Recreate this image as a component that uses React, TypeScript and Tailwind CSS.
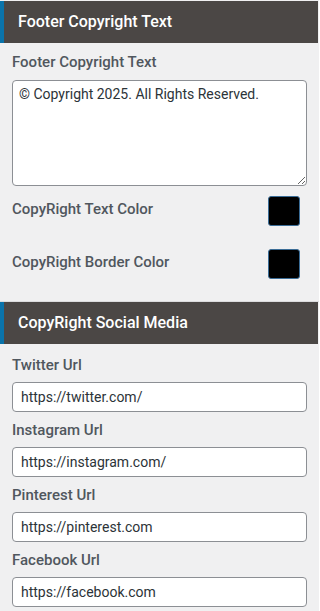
import React from "react";

const font = { fontFamily: "Roboto, 'Noto Sans', sans-serif" };

function Header({ title }: { title: string }) {
  return (
    <div className="mr-[1px] flex h-[42px] items-center border-l-4 border-[#0a73aa] bg-[#4b4745] pl-[14px] text-[16px] font-medium text-white">
      {title}
    </div>
  );
}

function UrlField({ label, value }: { label: string; value: string }) {
  return (
    <div className="flex flex-col">
      <div className="h-[20px] text-[15px] leading-[20px] font-medium text-[#50575e]">{label}</div>
      <input
        readOnly
        value={value}
        className="mt-[7px] h-[30px] w-full rounded-[4px] border border-[#8c8f94] bg-white px-[8px] text-[14px] text-[#2c3338] outline-none"
        style={font}
      />
    </div>
  );
}

export default function App() {
  return (
    <div className="w-[319px] min-h-[611px] bg-[#f0f0f1] pt-[1px]" style={font}>
      <Header title="Footer Copyright Text" />
      <div className="px-[12px] pt-[9px]">
        <div className="h-[20px] text-[15px] leading-[20px] font-medium text-[#50575e]">Footer Copyright Text</div>
        <textarea
          readOnly
          value="© Copyright 2025. All Rights Reserved."
          className="mt-[8px] block h-[106px] w-full rounded-[4px] border border-[#8c8f94] bg-white px-[6px] py-[3px] text-[14px] leading-[20px] text-[#2c3338] outline-none"
          style={font}
        />
        <div className="mt-[10px] flex h-[30px] items-center justify-between">
          <span className="-mt-[3px] text-[15px] font-medium text-[#50575e]">CopyRight Text Color</span>
          <div className="mr-[7px] h-[30px] w-[32px] rounded-[3px] border border-[#3a6c96] bg-black" />
        </div>
        <div className="mt-[23px] flex h-[30px] items-center justify-between">
          <span className="-mt-[3px] text-[15px] font-medium text-[#50575e]">CopyRight Border Color</span>
          <div className="mr-[7px] h-[30px] w-[32px] rounded-[3px] border border-[#3a6c96] bg-black" />
        </div>
      </div>
      <div className="mt-[22px] border-t border-[#dcdcde]">
        <Header title="CopyRight Social Media" />
      </div>
      <div className="flex flex-col gap-[8px] px-[12px] pt-[11px]">
        <UrlField label="Twitter Url" value="https://twitter.com/" />
        <UrlField label="Instagram Url" value="https://instagram.com/" />
        <UrlField label="Pinterest Url" value="https://pinterest.com" />
        <UrlField label="Facebook Url" value="https://facebook.com" />
      </div>
    </div>
  );
}
